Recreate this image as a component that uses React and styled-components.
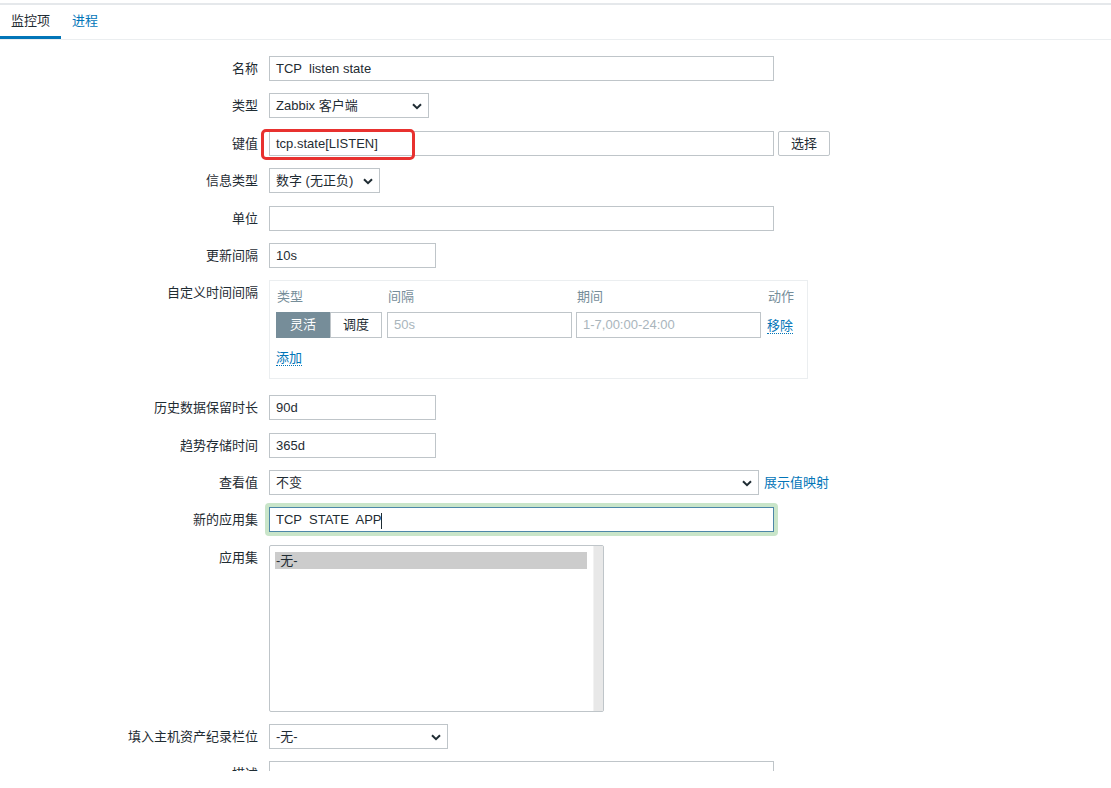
import React from "react";
import styled, { createGlobalStyle } from "styled-components";

const GlobalStyle = createGlobalStyle`
  html, body {
    margin: 0;
    padding: 0;
    background: #ffffff;
  }
  body {
    font-family: "Liberation Sans", Arial, "Noto Sans CJK SC", sans-serif;
    font-size: 13px;
    color: #1f2c33;
  }
`;

const Page = styled.div`
  width: 1111px;
  height: 771px;
  overflow: hidden;
  background: #fff;
`;

const TopLine = styled.div`
  height: 2px;
  margin-top: 3px;
  background: #e5e8eb;
`;

const TabBar = styled.div`
  display: flex;
  height: 34px;
  border-bottom: 1px solid #ebeef0;
`;

const Tab = styled.div`
  box-sizing: border-box;
  height: 34px;
  padding: 0 11px;
  line-height: 31px;
  border-bottom: 3px solid ${(p) => (p.active ? "#0275b8" : "transparent")};
  color: ${(p) => (p.active ? "#1f2c33" : "#0275b8")};
`;

const Form = styled.div`
  display: grid;
  grid-template-columns: 258px 1fr;
  column-gap: 11px;
  row-gap: 12.4px;
  padding-top: 16px;
`;

const Label = styled.div`
  text-align: right;
  line-height: 25px;
  white-space: nowrap;
  align-self: start;
`;

const Line = styled.div`
  display: flex;
  align-items: center;
  gap: ${(p) => p.gap || 4}px;
  align-self: start;
`;

const Field = styled.div`
  box-sizing: border-box;
  position: relative;
  width: ${(p) => p.w}px;
  height: ${(p) => p.h || 25}px;
  border: 1px solid #bfc5c9;
  background: #fff;
  padding: 0 6px;
  line-height: 23px;
  white-space: pre;
  color: ${(p) => (p.placeholder ? "#a9b5bc" : "#1f2c33")};
`;

const KeyWrap = styled.div`
  position: relative;
`;

const RedMark = styled.div`
  position: absolute;
  left: -8px;
  top: -2px;
  width: 154px;
  height: 31px;
  box-sizing: border-box;
  border: 3px solid #e8312f;
  border-radius: 5px;
  pointer-events: none;
`;

const Button = styled.div`
  box-sizing: border-box;
  height: 25px;
  padding: 0 12px;
  line-height: 23px;
  border: 1px solid #bfc5c9;
  border-radius: 2px;
  background: #fff;
  color: #1f2c33;
`;

const SelectBox = styled(Field)`
  padding-right: 24px;
`;

const Chevron = styled.svg`
  position: absolute;
  right: 6px;
  top: 9px;
`;

const Link = styled.span`
  color: #0275b8;
  border-bottom: 1px dotted #0275b8;
  line-height: 15px;
`;

const PlainLink = styled.span`
  color: #0275b8;
  line-height: 25px;
`;

const IntervalBox = styled.div`
  box-sizing: border-box;
  width: 539px;
  height: 99px;
  margin-bottom: 3.4px;
  padding: 8px 6px 0;
  border: 1px solid #ebeef0;
`;

const IntervalGrid = styled.div`
  display: grid;
  grid-template-columns: 106px 184px 184px auto;
  column-gap: 5px;
  row-gap: 7px;
  align-items: center;
`;

const ColHead = styled.div`
  color: #768d99;
  line-height: 16px;
  padding-left: ${(p) => p.pad || 1}px;
`;

const Segmented = styled.div`
  display: flex;
  height: 26px;
`;

const Segment = styled.div`
  box-sizing: border-box;
  width: ${(p) => p.w}px;
  height: 26px;
  line-height: 24px;
  text-align: center;
  border: 1px solid ${(p) => (p.active ? "#768d99" : "#bfc5c9")};
  background: ${(p) => (p.active ? "#768d99" : "#fff")};
  color: ${(p) => (p.active ? "#fff" : "#1f2c33")};
`;

const AddRow = styled.div`
  margin-top: 12px;
  line-height: 16px;
`;

const FocusRing = styled.div`
  margin-left: -4px;
  padding: 4px;
  margin-top: -4px;
  margin-bottom: -4px;
  border-radius: 4px;
  background: #c9e5c9;
  align-self: start;
  width: fit-content;
`;

const FocusField = styled(Field)`
  border-color: #4d87a8;
  background: #fff;
`;

const Caret = styled.span`
  display: inline-block;
  width: 1px;
  height: 16px;
  background: #1f2c33;
  vertical-align: middle;
  margin-left: 0px;
`;

const ListBox = styled.div`
  box-sizing: border-box;
  display: flex;
  width: 335px;
  height: 167px;
  border: 1px solid #bfc5c9;
  border-radius: 2px;
  align-self: start;
`;

const ListItems = styled.div`
  flex: 1;
  padding: 6px 6px 0 5px;
`;

const ListItem = styled.div`
  height: 17px;
  line-height: 17px;
  background: ${(p) => (p.selected ? "#cccccc" : "transparent")};
  padding-left: 1px;
`;

const ScrollTrack = styled.div`
  width: 9px;
  background: #e8e8e8;
  border-left: 1px solid #f2f2f2;
`;

function Select({ w, children }) {
  return (
    <SelectBox w={w}>
      {children}
      <Chevron width="10" height="7" viewBox="0 0 10 7">
        <polyline points="1,1.2 5,5.2 9,1.2" fill="none" stroke="#1f2c33" strokeWidth="2" />
      </Chevron>
    </SelectBox>
  );
}

export default function App() {
  return (
    <>
      <GlobalStyle />
      <Page>
        <TopLine />
        <TabBar>
          <Tab active>监控项</Tab>
          <Tab>进程</Tab>
        </TabBar>
        <Form>
          <Label>名称</Label>
          <Line>
            <Field w={505}>TCP  listen state</Field>
          </Line>

          <Label>类型</Label>
          <Line>
            <Select w={160}>Zabbix 客户端</Select>
          </Line>

          <Label>键值</Label>
          <Line>
            <KeyWrap>
              <Field w={505}>tcp.state[LISTEN]</Field>
              <RedMark />
            </KeyWrap>
            <Button>选择</Button>
          </Line>

          <Label>信息类型</Label>
          <Line>
            <Select w={111}>数字 (无正负)</Select>
          </Line>

          <Label>单位</Label>
          <Line>
            <Field w={505} />
          </Line>

          <Label>更新间隔</Label>
          <Line>
            <Field w={167}>10s</Field>
          </Line>

          <Label>自定义时间间隔</Label>
          <IntervalBox>
            <IntervalGrid>
              <ColHead>类型</ColHead>
              <ColHead>间隔</ColHead>
              <ColHead>期间</ColHead>
              <ColHead pad={3}>动作</ColHead>
              <Segmented>
                <Segment w={54} active>灵活</Segment>
                <Segment w={52}>调度</Segment>
              </Segmented>
              <Field w={185} h={26} placeholder>50s</Field>
              <Field w={185} h={26} placeholder>1-7,00:00-24:00</Field>
              <div style={{ paddingLeft: 2 }}>
                <Link>移除</Link>
              </div>
            </IntervalGrid>
            <AddRow>
              <Link>添加</Link>
            </AddRow>
          </IntervalBox>

          <Label>历史数据保留时长</Label>
          <Line>
            <Field w={167}>90d</Field>
          </Line>

          <Label>趋势存储时间</Label>
          <Line>
            <Field w={167}>365d</Field>
          </Line>

          <Label>查看值</Label>
          <Line gap={5}>
            <Select w={490}>不变</Select>
            <PlainLink>展示值映射</PlainLink>
          </Line>

          <Label>新的应用集</Label>
          <FocusRing>
            <FocusField w={505}>
              TCP  STATE  APP
              <Caret />
            </FocusField>
          </FocusRing>

          <Label>应用集</Label>
          <ListBox>
            <ListItems>
              <ListItem selected>-无-</ListItem>
            </ListItems>
            <ScrollTrack />
          </ListBox>

          <Label>填入主机资产纪录栏位</Label>
          <Line>
            <Select w={179}>-无-</Select>
          </Line>

          <Label>描述</Label>
          <Line>
            <Field w={505} h={60} />
          </Line>
        </Form>
      </Page>
    </>
  );
}
